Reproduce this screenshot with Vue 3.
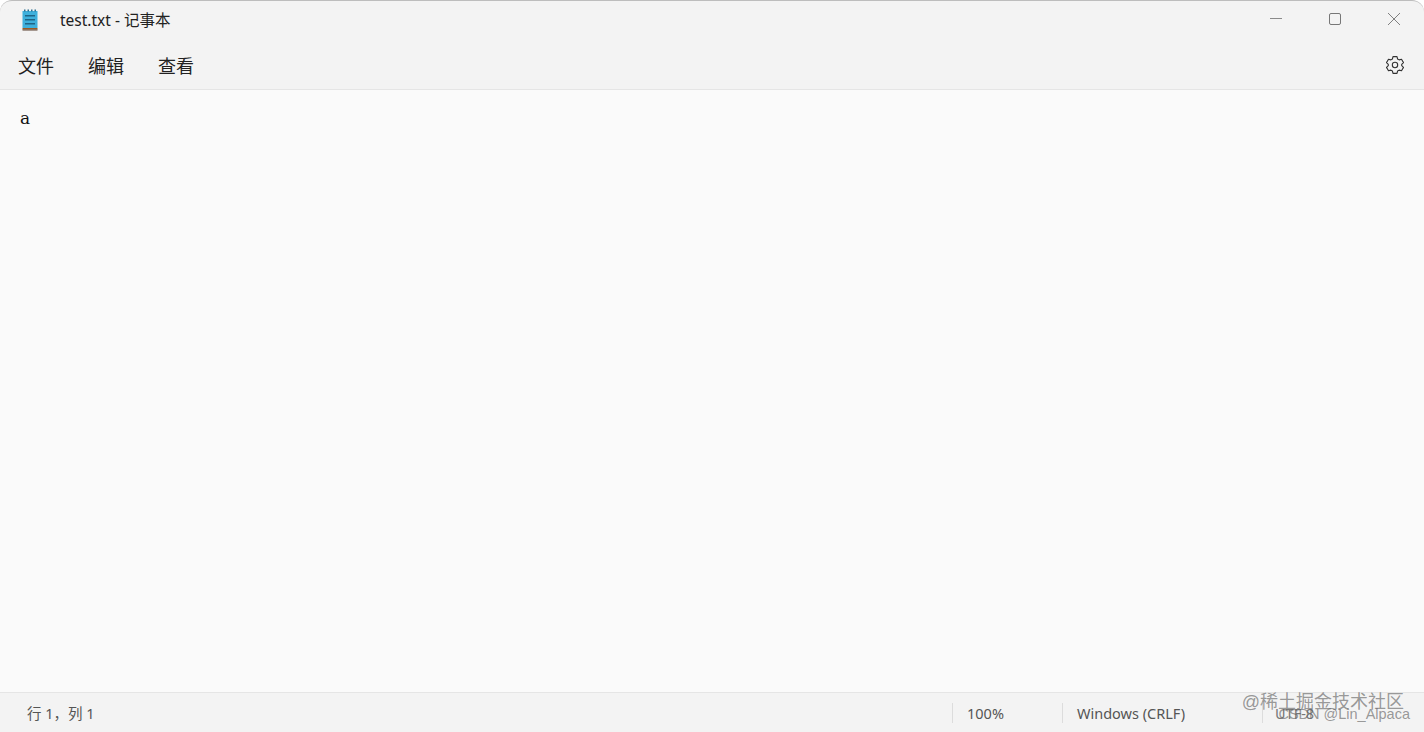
<script setup>
const menus = ["文件", "编辑", "查看"];
</script>

<template>
  <div class="window">
    <div class="titlebar">
      <svg class="app-icon" width="16" height="22" viewBox="0 0 16 22">
        <rect x="0.5" y="2" width="15" height="17" fill="#3fb0dc" />
        <rect x="0.5" y="19" width="15" height="1.5" fill="#9a5a24" />
        <rect x="0.5" y="20.5" width="15" height="1" fill="#5a4030" />
        <rect x="2" y="0.5" width="1.5" height="2" fill="#2c6f90" />
        <rect x="5.5" y="0.5" width="1.5" height="2" fill="#2c6f90" />
        <rect x="9" y="0.5" width="1.5" height="2" fill="#2c6f90" />
        <rect x="12.5" y="0.5" width="1.5" height="2" fill="#2c6f90" />
        <rect x="3" y="6" width="10" height="1.5" fill="#1f6486" />
        <rect x="3" y="10" width="10" height="1.5" fill="#1f6486" />
        <rect x="3" y="14" width="10" height="1.5" fill="#1f6486" />
      </svg>
      <span class="title">test.txt - 记事本</span>
      <div class="controls">
        <svg width="12" height="12" viewBox="0 0 12 12"><path d="M0 5.5H12" stroke="#8a8a8a" fill="none" /></svg>
        <svg width="12" height="12" viewBox="0 0 12 12"><rect x="0.5" y="0.5" width="11" height="11" rx="1.5" stroke="#777" fill="none" /></svg>
        <svg width="12" height="12" viewBox="0 0 12 12"><path d="M0 0L12 12M12 0L0 12" stroke="#808080" fill="none" /></svg>
      </div>
    </div>
    <div class="menubar">
      <span v-for="m in menus" :key="m" class="menu">{{ m }}</span>
      <svg class="gear" width="20" height="20" viewBox="0 0 20 20" fill="none" stroke="#333" stroke-width="1.1" stroke-linejoin="round">
        <path d="M8 1.6h4l.6 2.4 1.5.9 2.4-.7 2 3.4-1.8 1.7v1.4l1.8 1.7-2 3.4-2.4-.7-1.5.9-.6 2.4H8l-.6-2.4-1.5-.9-2.4.7-2-3.4 1.8-1.7V9.3L1.5 7.6l2-3.4 2.4.7 1.5-.9z" />
        <circle cx="10" cy="10" r="2.7" />
      </svg>
    </div>
    <div class="editor">a</div>
    <div class="statusbar">
      <span class="pos">行 1，列 1</span>
      <span class="cell zoom">100%</span>
      <span class="cell eol">Windows (CRLF)</span>
      <span class="cell enc">UTF-8</span>
    </div>
    <div class="watermark">
      <div class="wm1">@稀土掘金技术社区</div>
      <div class="wm2">CSDN @Lin_Alpaca</div>
    </div>
  </div>
</template>

<style scoped>
.window {
  position: relative;
  width: 1424px;
  height: 732px;
  display: flex;
  flex-direction: column;
  overflow: hidden;
  background: #f3f3f3;
  border-radius: 12px 12px 0 0;
  border-top: 1px solid #bdbdbd;
  box-sizing: border-box;
  font-family: "Noto Sans", "Noto Sans CJK SC", sans-serif;
  color: #1b1b1b;
}
.titlebar {
  height: 38px;
  display: flex;
  align-items: center;
  padding-left: 22px;
  flex-shrink: 0;
}
.app-icon {
  flex-shrink: 0;
}
.title {
  margin-left: 22px;
  font-size: 15.5px;
  line-height: 20px;
  margin-top: -1px;
  color: #222;
}
.controls {
  margin-left: auto;
  display: flex;
  align-items: center;
  gap: 47px;
  padding-right: 24px;
  margin-top: -2px;
}
.menubar {
  height: 50px;
  display: flex;
  align-items: center;
  padding-left: 18px;
  gap: 34px;
  border-bottom: 1px solid #e5e5e5;
  flex-shrink: 0;
}
.menu {
  font-size: 18px;
  color: #222;
  margin-top: 2px;
}
.gear {
  margin-left: auto;
  margin-right: 19px;
  margin-top: 1px;
}
.editor {
  flex: 1;
  background: #fafafa;
  padding: 16px 20px;
  font-family: "DejaVu Serif", serif;
  font-size: 17px;
  line-height: 24px;
  color: #111;
}
.statusbar {
  height: 40px;
  display: flex;
  align-items: center;
  border-top: 1px solid #e5e5e5;
  font-size: 14.5px;
  color: #555;
  flex-shrink: 0;
  box-sizing: border-box;
}
.pos {
  width: 952px;
  padding-left: 27px;
  box-sizing: border-box;
}
.cell {
  height: 20px;
  line-height: 20px;
  border-left: 1px solid #dcdcdc;
  box-sizing: border-box;
}
.zoom {
  width: 110px;
  padding-left: 14px;
}
.eol {
  width: 200px;
  padding-left: 14px;
}
.enc {
  padding-left: 12px;
  color: #777;
}
.watermark {
  position: absolute;
  right: 14px;
  bottom: 11px;
  color: rgba(100, 100, 100, 0.65);
  text-align: right;
  font-family: "Liberation Sans", "Noto Sans CJK SC", sans-serif;
  line-height: 1;
}
.wm1 {
  font-size: 18px;
  margin-right: 6px;
  margin-bottom: -4px;
}
.wm2 {
  font-size: 14.5px;
}
</style>

<style>
html, body {
  margin: 0;
  background: #fff;
}
</style>
